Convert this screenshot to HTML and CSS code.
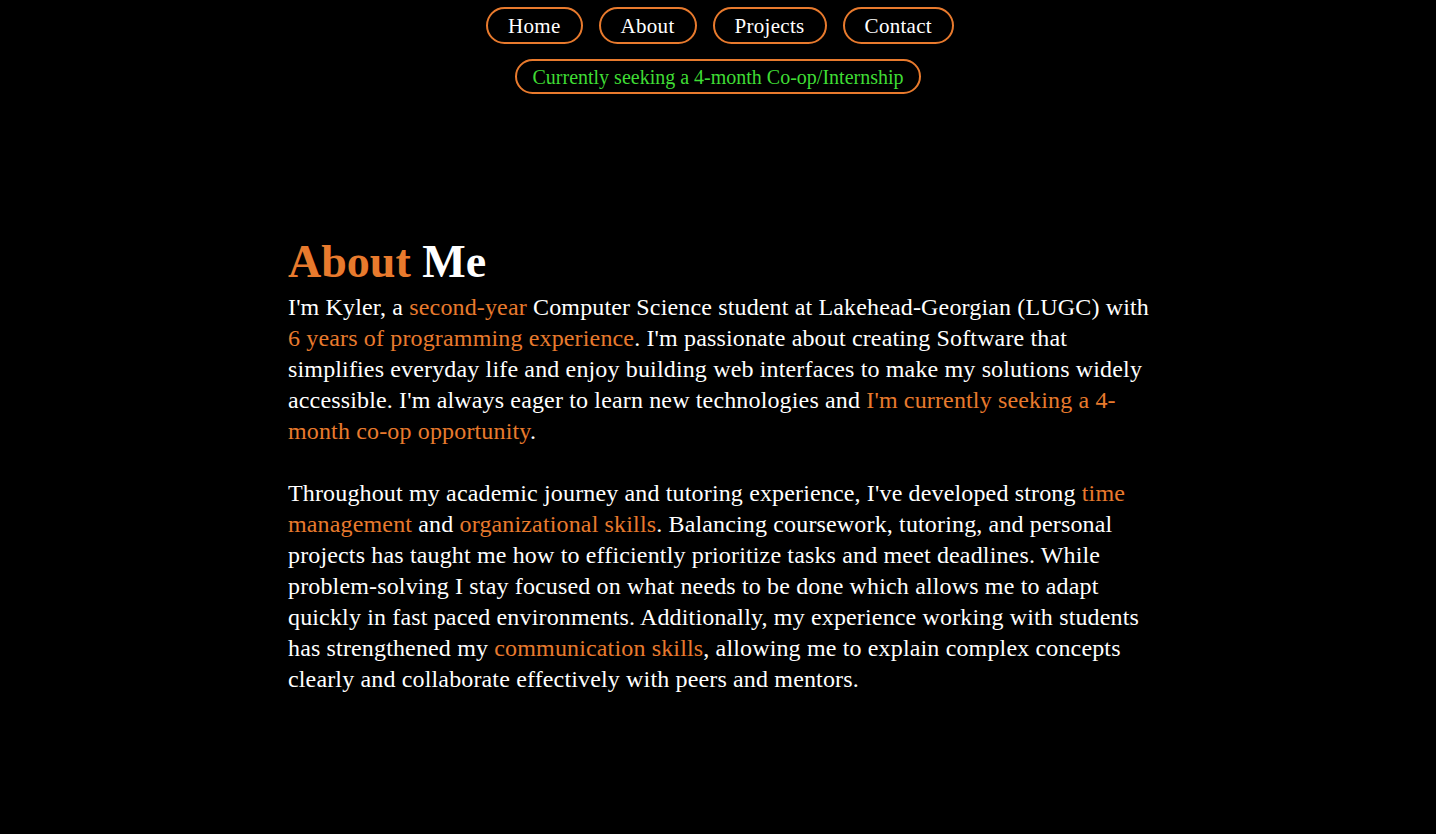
FILE: index.html
```html
<!DOCTYPE html>
<html lang="en">
<head>
<meta charset="utf-8">
<title>About Me</title>
<link rel="stylesheet" href="styles.css">
</head>
<body>
<header class="top">
  <nav class="nav">
    <a class="pill" href="#">Home</a>
    <a class="pill" href="#">About</a>
    <a class="pill" href="#">Projects</a>
    <a class="pill" href="#">Contact</a>
  </nav>
  <div class="status">Currently seeking a 4-month Co-op/Internship</div>
</header>
<main class="about">
  <h1 class="title"><span class="hl">About</span> Me</h1>
  <p>I'm Kyler, a <span class="hl">second-year</span> Computer Science student at Lakehead-Georgian (LUGC) with <span class="hl">6 years of programming experience</span>. I'm passionate about creating Software that simplifies everyday life and enjoy building web interfaces to make my solutions widely accessible. I'm always eager to learn new technologies and <span class="hl">I'm currently seeking a 4-month co-op opportunity</span>.</p>
  <p>Throughout my academic journey and tutoring experience, I've developed strong <span class="hl">time management</span> and <span class="hl">organizational skills</span>. Balancing coursework, tutoring, and personal projects has taught me how to efficiently prioritize tasks and meet deadlines. While problem-solving I stay focused on what needs to be done which allows me to adapt quickly in fast paced environments. Additionally, my experience working with students has strengthened my <span class="hl">communication skills</span>, allowing me to explain complex concepts clearly and collaborate effectively with peers and mentors.</p>
</main>
</body>
</html>
```
FILE: styles.css
```css
html, body {
  margin: 0;
  padding: 0;
  background: #000;
  color: #fff;
  font-family: "Liberation Serif", "DejaVu Serif", serif;
}
.top {
  display: flex;
  flex-direction: column;
  align-items: center;
  padding-top: 7px;
}
.nav {
  display: flex;
  gap: 16px;
  margin-left: 4px;
}
.pill {
  display: block;
  box-sizing: border-box;
  height: 37px;
  line-height: 35px;
  padding: 0 20px;
  border: 2px solid #e87a2d;
  border-radius: 19px;
  color: #fff;
  text-decoration: none;
  font-size: 21px;
  letter-spacing: 0.3px;
}
.status {
  margin-top: 15px;
  box-sizing: border-box;
  height: 35px;
  line-height: 32px;
  padding: 0 15px;
  border: 2px solid #e87a2d;
  border-radius: 18px;
  color: #3fdc34;
  font-size: 20px;
}
.about {
  width: 862px;
  margin: 143px auto 0;
  padding-left: 2px;
}
.title {
  margin: 0 0 5px;
  font-size: 46px;
  line-height: 50px;
  font-weight: bold;
}
.about p {
  margin: 0 0 31px;
  font-size: 24px;
  line-height: 31px;
  letter-spacing: 0.15px;
}
.hl {
  color: #e87a2d;
}
```
